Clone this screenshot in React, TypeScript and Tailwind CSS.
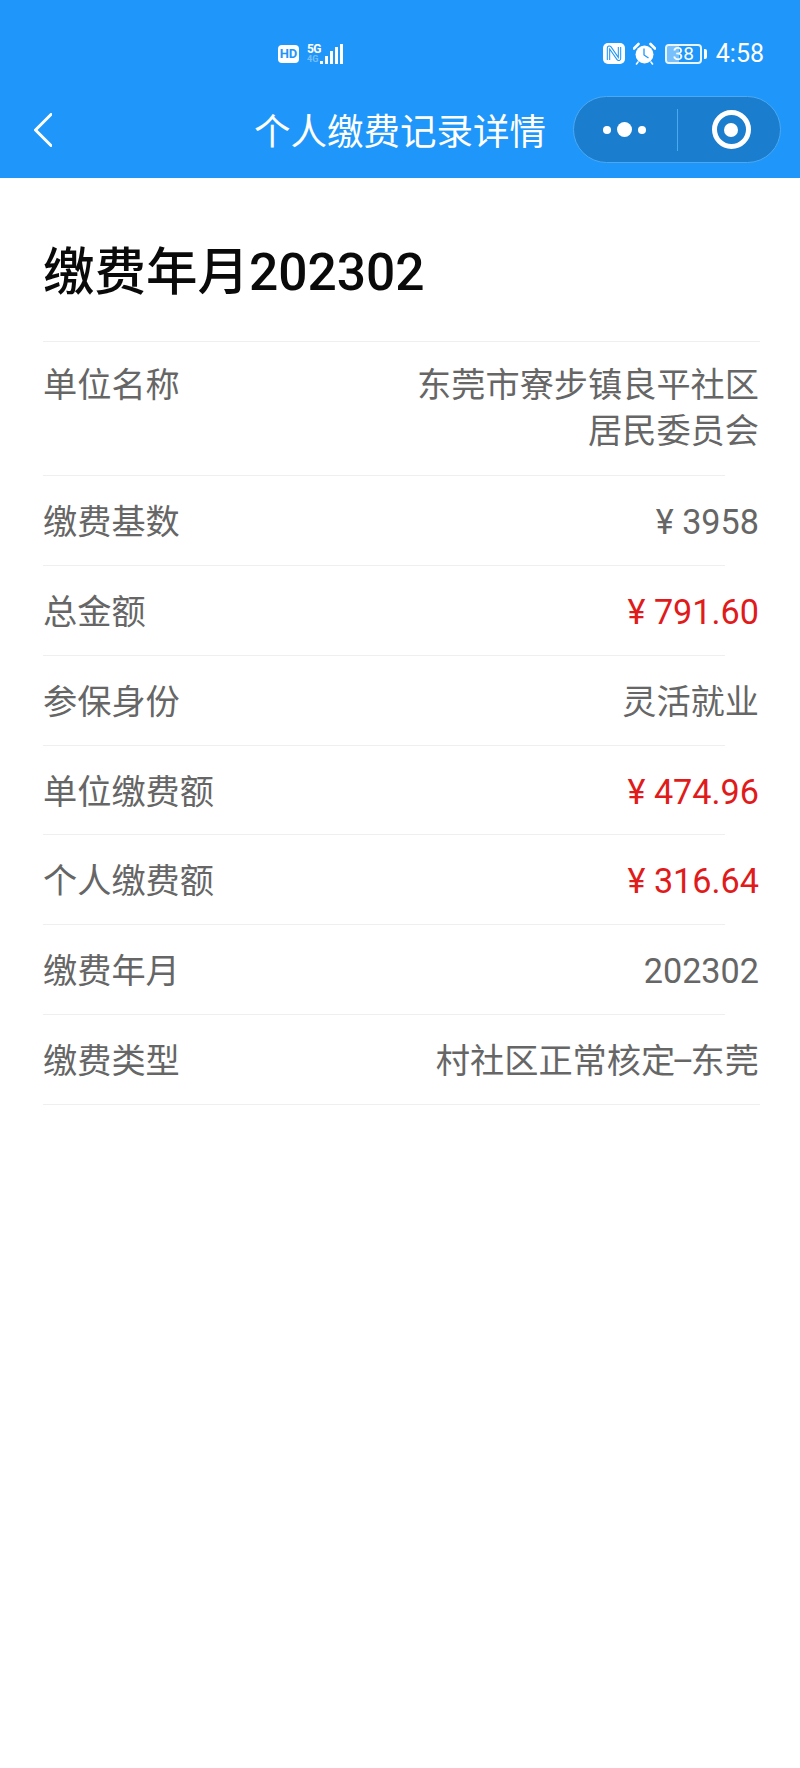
import React from 'react';

const rows = [
  { label: '单位名称', value: ['东莞市寮步镇良平社区', '居民委员会'] },
  { label: '缴费基数', value: ['¥ 3958'] },
  { label: '总金额', value: ['¥ 791.60'], red: true },
  { label: '参保身份', value: ['灵活就业'] },
  { label: '单位缴费额', value: ['¥ 474.96'], red: true },
  { label: '个人缴费额', value: ['¥ 316.64'], red: true },
  { label: '缴费年月', value: ['202302'] },
  {
    label: '缴费类型',
    value: [
      <>
        村社区正常核定<span className="mx-[-3.5px]">–</span>东莞
      </>,
    ],
  },
];

function SignalIcon() {
  return (
    <div className="flex items-end gap-[2px] h-[21px]">
      <div className="flex flex-col items-start w-[12px] mr-[-1px]">
        <span className="text-[12px] leading-[11px] font-bold tracking-tighter text-white">5G</span>
        <span className="text-[9px] leading-[9px] font-bold text-white/40">4G</span>
      </div>
      <div className="w-[3px] h-[3px] bg-white" />
      <div className="w-[3px] h-[8px] bg-white" />
      <div className="w-[3px] h-[13px] bg-white" />
      <div className="w-[3px] h-[17px] bg-white" />
      <div className="w-[3px] h-[20px] bg-white" />
    </div>
  );
}

function NfcIcon() {
  return (
    <svg width="22" height="21" viewBox="0 0 22 21">
      <rect x="0" y="0" width="22" height="21" rx="5" fill="#fff" />
      <path d="M5.5 17V5c0-1 1-1.2 1.6-.4L15 16c.5.7 1.5.4 1.5-.5V4" fill="none" stroke="#1e96fa" strokeWidth="3.4" />
      <path d="M5.5 17V5c0-1 1-1.2 1.6-.4L15 16c.5.7 1.5.4 1.5-.5V4" fill="none" stroke="#fff" strokeWidth="1.3" />
    </svg>
  );
}

function AlarmIcon() {
  return (
    <svg width="23" height="23" viewBox="0 0 23 23">
      <circle cx="11.5" cy="12.5" r="9" fill="#fff" />
      <path d="M11 6.5v6.5l4.5 3" fill="none" stroke="#1e96fa" strokeWidth="1.3" />
      <path d="M1 6.5 5.5 2M22 6.5 17.5 2" stroke="#fff" strokeWidth="2.6" strokeLinecap="round" />
      <path d="M5 20l-1.5 2M18 20l1.5 2" stroke="#fff" strokeWidth="1.6" strokeLinecap="round" />
    </svg>
  );
}

function Battery() {
  return (
    <div className="flex items-center gap-[2px]">
      <div className="relative w-[37px] h-[20px] rounded-[4px] border-2 border-white/90 overflow-hidden flex items-center justify-center">
        <div className="absolute left-0 top-0 bottom-0 w-[38%] bg-white/40" />
        <span className="relative text-[19px] leading-none text-white">38</span>
      </div>
      <div className="w-[3px] h-[10px] rounded-r-[2px] bg-white" />
    </div>
  );
}

export default function App() {
  return (
    <div className="w-[800px] h-[1768px] bg-white font-['Roboto','Noto_Sans_CJK_SC',sans-serif]">
      <header className="bg-[#1e96fa] h-[178px] pt-[43px]">
        <div className="flex items-center justify-between h-[21px] pl-[278px] pr-[36px]">
          <div className="flex items-center gap-[8px]">
            <div className="w-[21px] h-[18px] rounded-[4px] bg-white flex items-center justify-center text-[13px] leading-none font-bold text-[#1e96fa]">
              HD
            </div>
            <SignalIcon />
          </div>
          <div className="flex items-center">
            <NfcIcon />
            <div className="ml-[8px]">
              <AlarmIcon />
            </div>
            <div className="ml-[9px]">
              <Battery />
            </div>
            <span className="ml-[9px] text-[25px] leading-none text-white">4:58</span>
          </div>
        </div>
        <div className="flex items-center mt-[32px]">
          <div className="w-[254px] pl-[34px]">
            <svg width="18" height="34" viewBox="0 0 18 34" className="block">
              <path d="M17 1.5 1.5 17 17 32.5" fill="none" stroke="#fff" strokeWidth="3" strokeLinecap="round" strokeLinejoin="round" />
            </svg>
          </div>
          <h1 className="w-[292px] pt-[6px] text-[36.5px] leading-[46px] text-white whitespace-nowrap">个人缴费记录详情</h1>
          <div className="ml-[27px] w-[208px] h-[67px] rounded-full bg-[#1a7dcd] border border-[#4ba9f3] flex items-center">
            <div className="w-[103px] flex items-center justify-center gap-[6px] pr-[2px]">
              <div className="w-[8px] h-[8px] rounded-full bg-white" />
              <div className="w-[15px] h-[15px] rounded-full bg-white" />
              <div className="w-[8px] h-[8px] rounded-full bg-white" />
            </div>
            <div className="w-px h-[42px] bg-[#4ba9f3]" />
            <div className="flex-1 flex items-center justify-center pl-[4px]">
              <div className="w-[39px] h-[39px] rounded-full border-[5px] border-white flex items-center justify-center">
                <div className="w-[14px] h-[14px] rounded-full bg-white" />
              </div>
            </div>
          </div>
        </div>
      </header>

      <main className="pl-[43px] pr-[40px]">
        <h2 className="pt-[63px] pb-[36px] text-[51.5px] leading-[64px] font-medium text-[#0a0a0a]">缴费年月202302</h2>
        <div className="h-px bg-[#efefef]" />
        {rows.map((row, i) => (
          <div key={row.label}>
            <div
              className={
                row.value.length > 1
                  ? 'flex justify-between pt-[20px] pb-[21px] pr-[1px] text-[34.2px] leading-[46px]'
                  : 'flex justify-between pt-[23px] pb-[19.86px] pr-[1px] text-[34.2px] leading-[46px]'
              }
            >
              <span className="text-[#666666] whitespace-nowrap">{row.label}</span>
              <div className={row.red ? 'text-right text-[#e01b1b]' : 'text-right text-[#666666]'}>
                {row.value.map((line, j) => (
                  <div key={j} className="whitespace-nowrap">{line}</div>
                ))}
              </div>
            </div>
            <div className={i === rows.length - 1 ? 'h-px bg-[#efefef]' : 'h-px bg-[#efefef] mr-[35px]'} />
          </div>
        ))}
      </main>
    </div>
  );
}
